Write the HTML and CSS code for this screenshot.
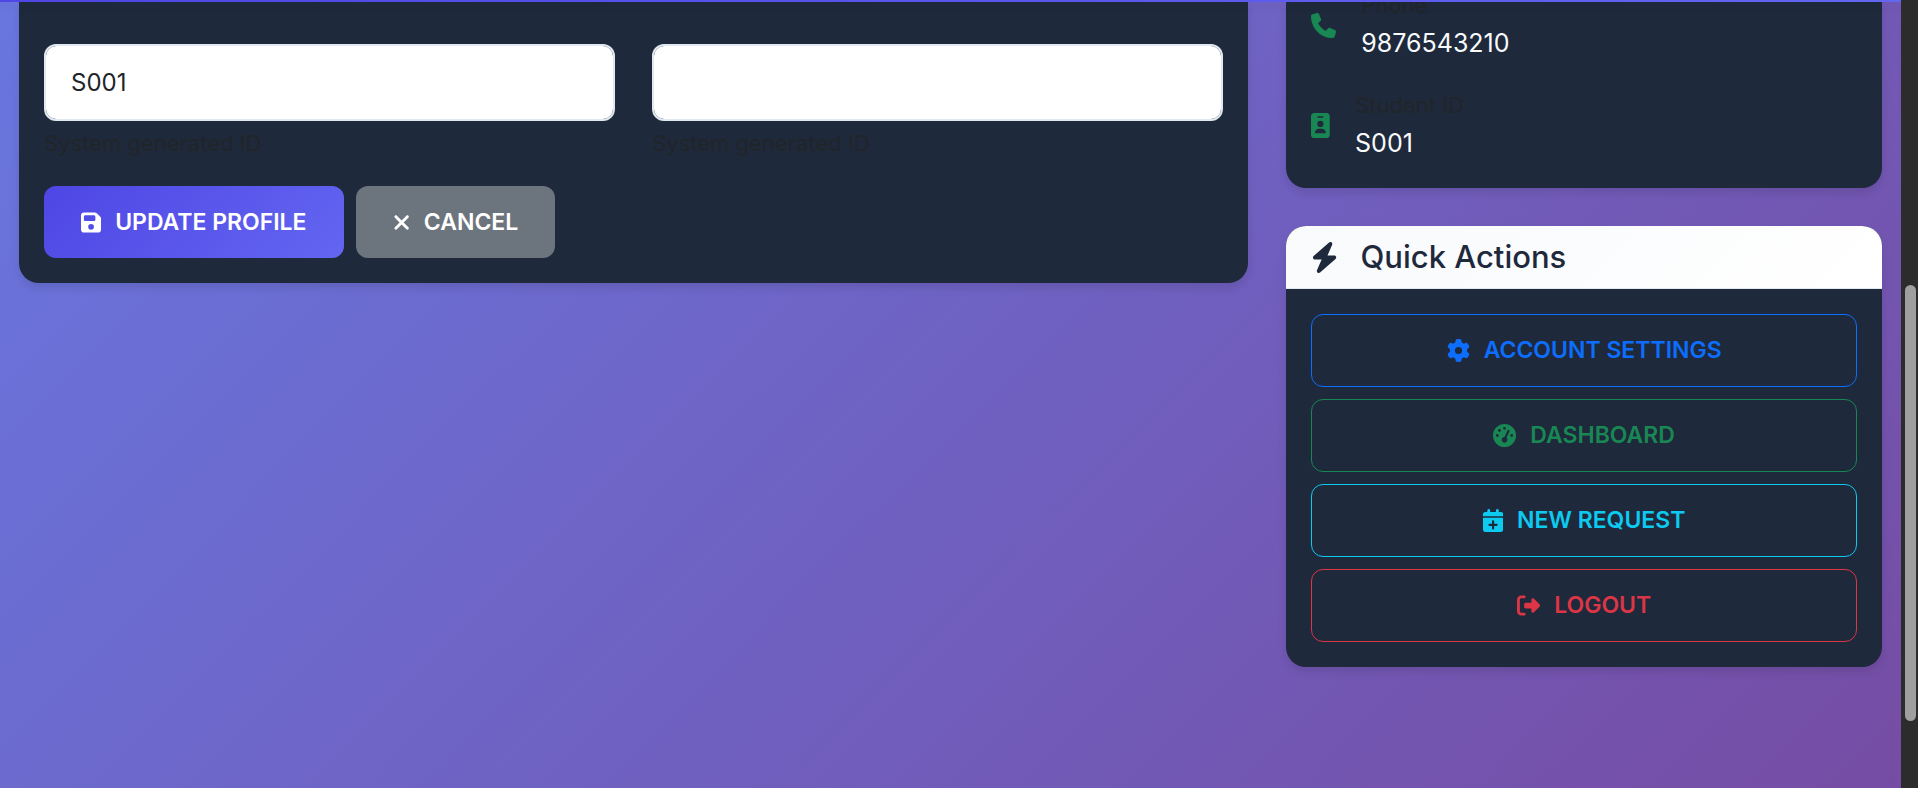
FILE: index.html
```html
<!DOCTYPE html>
<html lang="en">
<head>
<meta charset="utf-8">
<meta name="viewport" content="width=device-width, initial-scale=1">
<title>Student Profile</title>
<link rel="stylesheet" href="styles.css">
</head>
<body>
<div class="window">
  <div class="page">
    <header class="topbar"></header>
    <main class="row">
      <section class="col col-main">
        <form class="card card-open profile-form">
          <div class="fields">
            <div class="field">
              <input class="input" type="text" value="S001" aria-label="Student ID" aria-describedby="student-help" readonly>
              <small class="help" id="student-help">System generated ID</small>
            </div>
            <div class="field">
              <input class="input" type="text" value="" aria-label="Record ID" aria-describedby="record-help" readonly>
              <small class="help" id="record-help">System generated ID</small>
            </div>
          </div>
          <div class="buttons">
            <button class="btn btn-primary" type="submit">
              <svg class="icon" viewBox="0 0 448 512" aria-hidden="true"><path d="M64 32C28.7 32 0 60.7 0 96V416c0 35.3 28.7 64 64 64H384c35.3 0 64-28.7 64-64V173.3c0-17-6.7-33.3-18.7-45.3L352 50.7C340 38.7 323.7 32 306.7 32H64zm0 96c0-17.7 14.3-32 32-32H288c17.7 0 32 14.3 32 32v64c0 17.7-14.3 32-32 32H96c-17.7 0-32-14.3-32-32V128zM224 288a64 64 0 1 1 0 128 64 64 0 1 1 0-128z"/></svg>
              Update Profile
            </button>
            <button class="btn btn-secondary" type="button">
              <svg class="icon" viewBox="0 0 384 512" aria-hidden="true"><path d="M342.6 150.6c12.5-12.5 12.5-32.8 0-45.3s-32.8-12.5-45.3 0L192 210.7 86.6 105.4c-12.5-12.5-32.8-12.5-45.3 0s-12.5 32.8 0 45.3L146.7 256 41.4 361.4c-12.5 12.5-12.5 32.8 0 45.3s32.8 12.5 45.3 0L192 301.3 297.4 406.6c12.5 12.5 32.8 12.5 45.3 0s12.5-32.8 0-45.3L237.3 256 342.6 150.6z"/></svg>
              Cancel
            </button>
          </div>
        </form>
      </section>
      <aside class="col col-side">
        <section class="card card-open contact">
          <div class="contact-item">
            <svg class="contact-icon" viewBox="0 0 512 512" aria-hidden="true"><path d="M164.9 24.6c-7.7-18.6-28-28.5-47.4-23.2l-88 24C12.1 30.2 0 46 0 64C0 311.4 200.6 512 448 512c18 0 33.8-12.1 38.6-29.5l24-88c5.3-19.4-4.6-39.7-23.2-47.4l-96-40c-16.3-6.8-35.2-2.1-46.3 11.6L304.7 368C234.3 334.7 177.3 277.7 144 207.3L193.3 167c13.7-11.2 18.4-30 11.6-46.3l-40-96z"/></svg>
            <div>
              <small class="contact-label">Phone</small>
              <div class="contact-value">9876543210</div>
            </div>
          </div>
          <div class="contact-item">
            <svg class="contact-icon" viewBox="0 0 384 512" aria-hidden="true"><path d="M64 0C28.7 0 0 28.7 0 64V448c0 35.3 28.7 64 64 64H320c35.3 0 64-28.7 64-64V64c0-35.3-28.7-64-64-64H64zm96 320h64c44.2 0 80 35.8 80 80c0 8.8-7.2 16-16 16H96c-8.8 0-16-7.2-16-16c0-44.2 35.8-80 80-80zm-32-96a64 64 0 1 1 128 0 64 64 0 1 1 -128 0zM144 64h96c8.8 0 16 7.2 16 16s-7.2 16-16 16H144c-8.8 0-16-7.2-16-16s7.2-16 16-16z"/></svg>
            <div>
              <small class="contact-label">Student ID</small>
              <div class="contact-value">S001</div>
            </div>
          </div>
        </section>
        <section class="card">
          <h2 class="card-title">
            <svg class="title-icon" viewBox="0 0 448 512" aria-hidden="true"><path d="M349.4 44.6c5.9-13.7 1.5-29.7-10.6-38.5s-28.6-8-39.9 1.8l-256 224c-10 8.8-13.6 22.9-8.9 35.3S50.7 288 64 288H175.5L98.6 467.4c-5.9 13.7-1.5 29.7 10.6 38.5s28.6 8 39.9-1.8l256-224c10-8.8 13.6-22.9 8.9-35.3s-16.6-20.7-30-20.7H272.5L349.4 44.6z"/></svg>
            Quick Actions
          </h2>
          <nav class="actions">
            <a class="btn btn-outline blue" href="#settings">
              <svg class="icon" viewBox="0 0 512 512" aria-hidden="true"><path d="M495.9 166.6c3.2 8.7 .5 18.4-6.4 24.6l-43.3 39.4c1.1 8.3 1.7 16.8 1.7 25.4s-.6 17.1-1.7 25.4l43.3 39.4c6.9 6.2 9.6 15.9 6.4 24.6c-4.4 11.9-9.7 23.3-15.8 34.3l-4.7 8.1c-6.6 11-14 21.4-22.1 31.2c-5.9 7.2-15.7 9.6-24.5 6.8l-55.7-17.7c-13.4 10.3-28.2 18.9-44 25.4l-12.5 57.1c-2 9.1-9 16.3-18.2 17.8c-13.8 2.3-28 3.5-42.5 3.5s-28.7-1.2-42.5-3.5c-9.2-1.5-16.2-8.7-18.2-17.8l-12.5-57.1c-15.8-6.5-30.6-15.1-44-25.4L83.1 425.9c-8.8 2.8-18.6 .3-24.5-6.8c-8.1-9.8-15.5-20.2-22.1-31.2l-4.7-8.1c-6.1-11-11.4-22.4-15.8-34.3c-3.2-8.7-.5-18.4 6.4-24.6l43.3-39.4C64.6 273.1 64 264.6 64 256s.6-17.1 1.7-25.4L22.4 191.2c-6.9-6.2-9.6-15.9-6.4-24.6c4.4-11.9 9.7-23.3 15.8-34.3l4.7-8.1c6.6-11 14-21.4 22.1-31.2c5.9-7.2 15.7-9.6 24.5-6.8l55.7 17.7c13.4-10.3 28.2-18.9 44-25.4l12.5-57.1c2-9.1 9-16.3 18.2-17.8C227.3 1.2 241.5 0 256 0s28.7 1.2 42.5 3.5c9.2 1.5 16.2 8.7 18.2 17.8l12.5 57.1c15.8 6.5 30.6 15.1 44 25.4l55.7-17.7c8.8-2.8 18.6-.3 24.5 6.8c8.1 9.8 15.5 20.2 22.1 31.2l4.7 8.1c6.1 11 11.4 22.4 15.8 34.3zM256 336a80 80 0 1 0 0-160 80 80 0 1 0 0 160z"/></svg>
              Account Settings
            </a>
            <a class="btn btn-outline green" href="#dashboard">
              <svg class="icon" viewBox="0 0 512 512" aria-hidden="true"><path d="M0 256a256 256 0 1 1 512 0A256 256 0 1 1 0 256zM288 96a32 32 0 1 0 -64 0 32 32 0 1 0 64 0zM256 416c35.3 0 64-28.7 64-64c0-17.4-6.9-33.1-18.1-44.6L366 161.7c5.3-12.1-.2-26.3-12.3-31.6s-26.3 .2-31.6 12.3L257.9 288c-.6 0-1.3 0-1.9 0c-35.3 0-64 28.7-64 64s28.7 64 64 64zM176 144a32 32 0 1 0 -64 0 32 32 0 1 0 64 0zM96 288a32 32 0 1 0 0-64 32 32 0 1 0 0 64zm352-32a32 32 0 1 0 -64 0 32 32 0 1 0 64 0z"/></svg>
              Dashboard
            </a>
            <a class="btn btn-outline cyan" href="#request">
              <svg class="icon" viewBox="0 0 448 512" aria-hidden="true"><path d="M96 32V64H48C21.5 64 0 85.5 0 112v48H448V112c0-26.5-21.5-48-48-48H352V32c0-17.7-14.3-32-32-32s-32 14.3-32 32V64H160V32c0-17.7-14.3-32-32-32S96 14.3 96 32zM448 192H0V464c0 26.5 21.5 48 48 48H400c26.5 0 48-21.5 48-48V192zM224 248c13.3 0 24 10.7 24 24v56h56c13.3 0 24 10.7 24 24s-10.7 24-24 24H248v56c0 13.3-10.7 24-24 24s-24-10.7-24-24V376H144c-13.3 0-24-10.7-24-24s10.7-24 24-24h56V272c0-13.3 10.7-24 24-24z"/></svg>
              New Request
            </a>
            <a class="btn btn-outline red" href="#logout">
              <svg class="icon" viewBox="0 0 512 512" aria-hidden="true"><path d="M377.9 105.9L500.7 228.7c7.2 7.2 11.3 17.1 11.3 27.3s-4.1 20.1-11.3 27.3L377.9 406.1c-6.4 6.4-15 9.9-24 9.9c-18.7 0-33.9-15.2-33.9-33.9l0-62.1-128 0c-17.7 0-32-14.3-32-32l0-64c0-17.7 14.3-32 32-32l128 0 0-62.1c0-18.7 15.2-33.9 33.9-33.9c9 0 17.6 3.6 24 9.9zM160 96L96 96c-17.7 0-32 14.3-32 32l0 256c0 17.7 14.3 32 32 32l64 0c17.7 0 32 14.3 32 32s-14.3 32-32 32l-64 0c-53 0-96-43-96-96L0 128C0 75 43 32 96 32l64 0c17.7 0 32 14.3 32 32s-14.3 32-32 32z"/></svg>
              Logout
            </a>
          </nav>
        </section>
      </aside>
    </main>
  </div>
  <div class="scrollbar" aria-hidden="true"><div class="thumb"></div></div>
</div>
</body>
</html>
```

FILE: styles.css
```css
* {
  box-sizing: border-box;
}

body {
  margin: 0;
  font-family: Inter, "Liberation Sans", sans-serif;
  font-size: 24px;
  line-height: 1.5;
  color: #212529;
}

.window {
  display: flex;
  height: 100vh;
  overflow: hidden;
}

.page {
  flex: 1;
  min-width: 0;
  overflow: hidden;
  background: linear-gradient(135deg, #667eea 0%, #764ba2 100%) 0 -484px / 100% 1363px;
}

.topbar {
  position: relative;
  z-index: 1;
  height: 2px;
  background: linear-gradient(135deg, #4f46e5, #6366f1);
  box-shadow: 0 5px 8px rgba(0, 0, 0, 0.1);
}

.row {
  display: flex;
  align-items: flex-start;
}

.col {
  padding: 0 19px;
}

.col-main {
  width: 66.6667%;
}

.col-side {
  width: 33.3333%;
}

.card {
  margin-bottom: 38px;
  border-radius: 20px;
  background: #1e293b;
  box-shadow: 0 5px 8px rgba(0, 0, 0, 0.1);
  overflow: hidden;
}

.card-open {
  border-radius: 0 0 20px 20px;
}

.profile-form {
  padding: 42px 25px 25px;
}

.fields {
  display: grid;
  grid-template-columns: 1fr 1fr;
  gap: 37px;
  margin-bottom: 26px;
}

.input {
  display: block;
  width: 100%;
  height: 77px;
  padding: 0 25px;
  border: 2px solid #e2e8f0;
  border-radius: 12px;
  background: #fff;
  background-clip: padding-box;
  color: #212529;
  font: inherit;
}

.help {
  display: block;
  margin-top: 6px;
  font-size: 22px;
  line-height: 33px;
}

.buttons {
  display: flex;
  gap: 12px;
}

.btn {
  display: flex;
  align-items: center;
  justify-content: center;
  gap: 14px;
  height: 72px;
  padding: 0 37px;
  border: 0;
  border-radius: 12px;
  font-family: inherit;
  font-size: 23px;
  font-weight: 600;
  text-transform: uppercase;
  text-decoration: none;
  color: #fff;
}

.btn-primary {
  background: linear-gradient(135deg, #4f46e5, #6366f1);
}

.btn-secondary {
  background: #6c757d;
}

.icon {
  height: 23px;
  fill: currentColor;
}

.contact {
  padding: 0 25px 13px;
}

.contact-item {
  display: flex;
  align-items: center;
  gap: 25px;
  height: 100px;
}

.contact-item:first-child {
  margin-top: -27px;
}

.contact-icon {
  height: 25px;
  fill: #198754;
}

.contact-label {
  display: block;
  margin-bottom: 2px;
  font-size: 22px;
  line-height: 33px;
}

.contact-value {
  font-size: 25px;
  line-height: 38px;
  color: #f8fafc;
}

.card-title {
  display: flex;
  align-items: center;
  gap: 22px;
  height: 63px;
  margin: 0;
  padding: 0 25px;
  border-bottom: 1px solid #e2e8f0;
  background: linear-gradient(135deg, #f8fafc, #fff);
  color: #1e293b;
  font-size: 31px;
  font-weight: 500;
}

.title-icon {
  height: 31px;
  fill: currentColor;
}

.actions {
  display: grid;
  gap: 12px;
  padding: 25px;
}

.btn-outline {
  height: 73px;
  border: 1px solid currentColor;
}

.blue {
  color: #0d6efd;
}

.green {
  color: #198754;
}

.cyan {
  color: #0dcaf0;
}

.red {
  color: #dc3545;
}

.scrollbar {
  display: grid;
  grid-template-rows: 285fr 436fr 67fr;
  width: 17px;
  padding: 0 2px 0 4px;
  background: #2c2c2c;
}

.thumb {
  grid-row: 2;
  border-radius: 6px;
  background: #9f9f9f;
}
```
